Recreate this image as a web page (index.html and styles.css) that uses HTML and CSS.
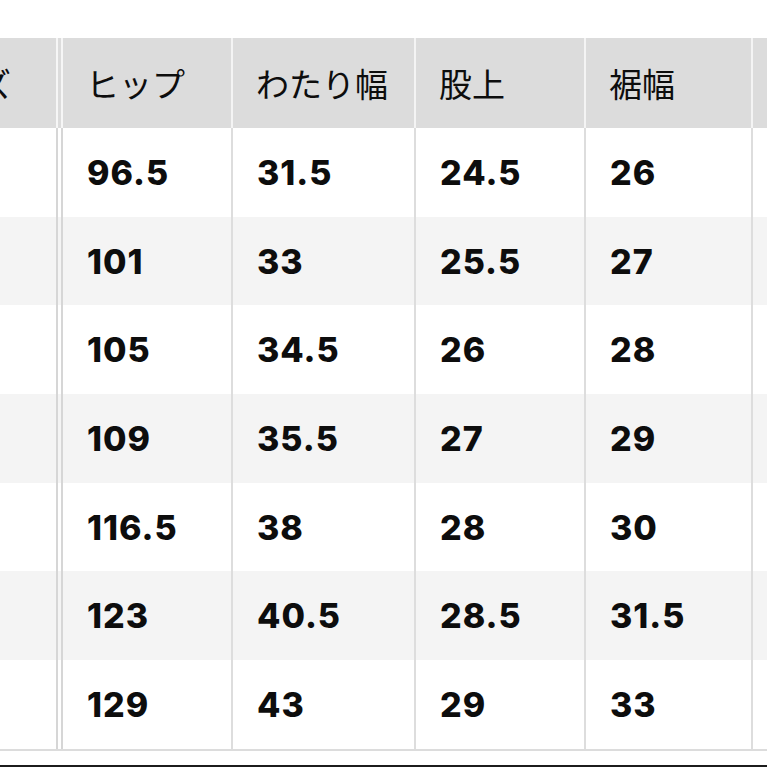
FILE: index.html
```html
<!DOCTYPE html>
<html lang="ja">
<head>
<meta charset="utf-8">
<title>サイズ表</title>
<link rel="stylesheet" href="styles.css">
</head>
<body>
<div class="frame">
  <table class="size-table">
    <colgroup>
      <col class="c-size">
      <col class="c-hip">
      <col class="c-thigh">
      <col class="c-rise">
      <col class="c-hem">
      <col class="c-next">
    </colgroup>
    <thead>
      <tr>
        <th class="first">サイズ</th>
        <th>ヒップ</th>
        <th>わたり幅</th>
        <th>股上</th>
        <th>裾幅</th>
        <th class="last"></th>
      </tr>
    </thead>
    <tbody>
      <tr><td class="first"></td><td>96.5</td><td>31.5</td><td>24.5</td><td>26</td><td class="last"></td></tr>
      <tr><td class="first"></td><td>101</td><td>33</td><td>25.5</td><td>27</td><td class="last"></td></tr>
      <tr><td class="first"></td><td>105</td><td>34.5</td><td>26</td><td>28</td><td class="last"></td></tr>
      <tr><td class="first"></td><td>109</td><td>35.5</td><td>27</td><td>29</td><td class="last"></td></tr>
      <tr><td class="first"></td><td>116.5</td><td>38</td><td>28</td><td>30</td><td class="last"></td></tr>
      <tr><td class="first"></td><td>123</td><td>40.5</td><td>28.5</td><td>31.5</td><td class="last"></td></tr>
      <tr><td class="first"></td><td>129</td><td>43</td><td>29</td><td>33</td><td class="last"></td></tr>
    </tbody>
  </table>
  <div class="bottom-rule"></div>
</div>
</body>
</html>
```

FILE: styles.css
```css
html, body {
  margin: 0;
  padding: 0;
  background: #ffffff;
}

.frame {
  width: 767px;
  height: 767px;
  overflow: hidden;
  padding-top: 38px;
  box-sizing: border-box;
}

.size-table {
  border-collapse: separate;
  border-spacing: 0;
  table-layout: fixed;
  width: 1058px;
  margin-left: -110px;
  color: #0d0d0d;
  border-bottom: 2px solid #dcdcdc;
}

.c-size { width: 173px; }
.c-hip { width: 170px; }
.c-thigh { width: 183px; }
.c-rise { width: 170px; }
.c-hem { width: 167px; }
.c-next { width: 200px; }

.size-table th,
.size-table td {
  padding: 0 0 0 25px;
  text-align: left;
  vertical-align: middle;
  white-space: nowrap;
  overflow: hidden;
  box-sizing: border-box;
}

.size-table th {
  height: 90px;
  background: #dcdcdc;
  font-family: "Noto Sans CJK JP", "Noto Sans", sans-serif;
  font-weight: 400;
  font-size: 33px;
  border-right: 2px solid #f4f4f4;
  padding-left: 23px;
}

.size-table td {
  height: 88.7px;
  font-family: Inter, "Liberation Sans", Arial, sans-serif;
  font-weight: 800;
  font-size: 34px;
  letter-spacing: 1px;
  border-right: 2px solid #dddddd;
  padding-left: 24px;
}

.size-table tbody tr:nth-child(even) td {
  background: #f4f4f4;
}

.size-table th.first {
  border-right: 7px double #f6f6f6;
}

.size-table td.first {
  border-right: 7px double #d6d6d6;
}

.size-table .last {
  border-right: none;
}

.bottom-rule {
  margin-top: 14px;
  height: 3px;
  background: #1c1c1c;
}
```
